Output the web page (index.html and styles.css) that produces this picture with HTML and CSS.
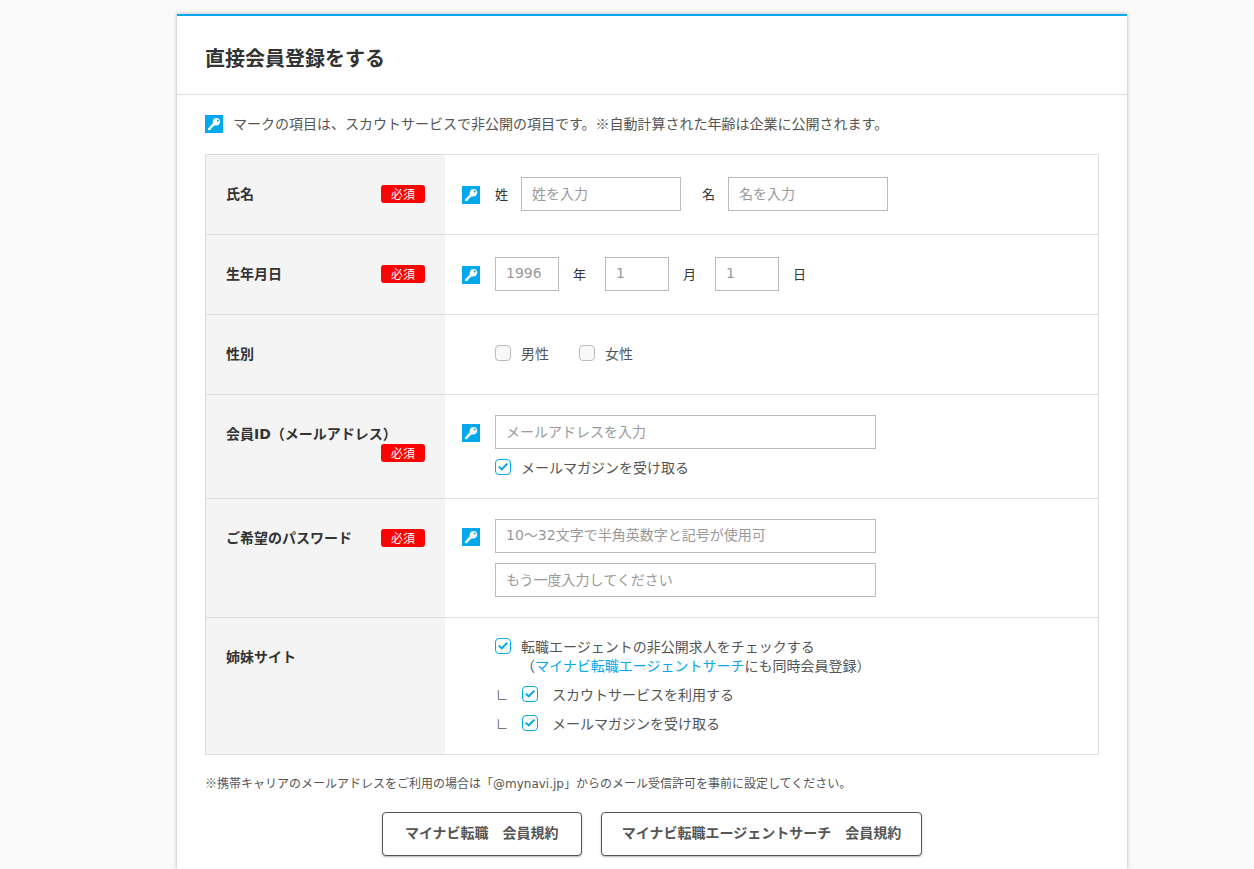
FILE: index.html
```html
<!DOCTYPE html>
<html lang="ja">
<head>
<meta charset="utf-8">
<meta name="viewport" content="width=device-width, initial-scale=1">
<title>直接会員登録をする</title>
<link rel="stylesheet" href="styles.css">
</head>
<body>
<svg class="sprite" aria-hidden="true">
  <symbol id="key" viewBox="0 0 18 18">
    <path fill="#fff" fill-rule="evenodd" d="M11.6 3c2.200 0 3.600 1.400 3.600 3.500 0 2.300-1.600 4-3.800 4-.6 0-1.100-.1-1.600-.3l-1.200 1.300-1 .1-.1 1.100-1.100.1-.2 1.200-1 .9-2 .4-.2-1.900 4.800-5c-.2-.5-.2-1-.1-1.600.2-2.200 1.700-3.800 3.900-3.800zm1.300 1.400a1 1 0 1 0 0 2 1 1 0 0 0 0-2z"/>
  </symbol>
</svg>
<main class="card">
  <header class="card-head">
    <h1 class="title">直接会員登録をする</h1>
  </header>
  <form class="card-body">
    <p class="notice">
      <svg class="key" aria-hidden="true"><use href="#key"/></svg>
      <span>マークの項目は、スカウトサービスで非公開の項目です。※自動計算された年齢は企業に公開されます。</span>
    </p>

    <div class="fields">
      <div class="row">
        <div class="row-label"><span>氏名</span><span class="required">必須</span></div>
        <div class="row-content one-line">
          <svg class="key" aria-hidden="true"><use href="#key"/></svg>
          <div class="inline">
            <label for="sei">姓</label>
            <input class="text name" id="sei" type="text" placeholder="姓を入力">
            <label class="next" for="mei">名</label>
            <input class="text name" id="mei" type="text" placeholder="名を入力">
          </div>
        </div>
      </div>

      <div class="row">
        <div class="row-label"><span>生年月日</span><span class="required">必須</span></div>
        <div class="row-content one-line">
          <svg class="key" aria-hidden="true"><use href="#key"/></svg>
          <div class="inline">
            <input class="text date" id="year" type="text" placeholder="1996">
            <label class="unit" for="year">年</label>
            <input class="text date" id="month" type="text" placeholder="1">
            <label class="unit" for="month">月</label>
            <input class="text date" id="day" type="text" placeholder="1">
            <label class="unit" for="day">日</label>
          </div>
        </div>
      </div>

      <div class="row">
        <div class="row-label"><span>性別</span></div>
        <div class="row-content no-key choices">
          <label class="choice"><input class="check" type="checkbox"><span>男性</span></label>
          <label class="choice"><input class="check" type="checkbox"><span>女性</span></label>
        </div>
      </div>

      <div class="row">
        <div class="row-label"><span>会員<span class="latin">ID</span>（メールアドレス）</span><span class="required">必須</span></div>
        <div class="row-content">
          <svg class="key" aria-hidden="true"><use href="#key"/></svg>
          <div class="stack">
            <input class="text" type="email" aria-label="会員ID（メールアドレス）" placeholder="メールアドレスを入力">
            <label class="choice"><input class="check" type="checkbox" checked><span>メールマガジンを受け取る</span></label>
          </div>
        </div>
      </div>

      <div class="row">
        <div class="row-label"><span>ご希望のパスワード</span><span class="required">必須</span></div>
        <div class="row-content">
          <svg class="key" aria-hidden="true"><use href="#key"/></svg>
          <div class="stack">
            <input class="text latin" type="password" aria-label="ご希望のパスワード" placeholder="10～32文字で半角英数字と記号が使用可">
            <input class="text" type="password" aria-label="ご希望のパスワード（確認）" placeholder="もう一度入力してください">
          </div>
        </div>
      </div>

      <div class="row">
        <div class="row-label"><span>姉妹サイト</span></div>
        <div class="row-content no-key">
          <div class="stack">
            <div class="choice">
              <input class="check" id="agent" type="checkbox" checked>
              <div><label for="agent">転職エージェントの非公開求人をチェックする</label><br>（<a class="link" href="#">マイナビ転職エージェントサーチ</a>にも同時会員登録）</div>
            </div>
            <label class="choice sub"><span class="branch">∟</span><input class="check" type="checkbox" checked><span>スカウトサービスを利用する</span></label>
            <label class="choice sub"><span class="branch">∟</span><input class="check" type="checkbox" checked><span>メールマガジンを受け取る</span></label>
          </div>
        </div>
      </div>
    </div>

    <p class="caution">※携帯キャリアのメールアドレスをご利用の場合は「<span class="latin">@mynavi.jp</span>」からのメール受信許可を事前に設定してください。</p>

    <div class="actions">
      <button class="terms" type="button">マイナビ転職　会員規約</button>
      <button class="terms" type="button">マイナビ転職エージェントサーチ　会員規約</button>
    </div>
  </form>
</main>
</body>
</html>
```
FILE: styles.css
```css
* {
  box-sizing: border-box;
}

body {
  display: flex;
  flex-direction: column;
  min-height: 100vh;
  margin: 0;
  padding: 14px 0 0 50px;
  background: #fafafa;
  color: #555;
  font-family: "Noto Sans CJK JP", sans-serif;
  font-size: 14px;
  line-height: 19px;
}

input,
button {
  margin: 0;
  font-family: inherit;
}

.sprite {
  position: absolute;
  width: 0;
  height: 0;
}

.latin {
  font-family: "DejaVu Sans", "Noto Sans CJK JP", sans-serif;
}

.card {
  flex: 1;
  width: 100%;
  max-width: 950px;
  margin: 0 auto;
  border-top: 2px solid #00a9ec;
  background: #fff;
  box-shadow: 0 0 4px rgba(0, 0, 0, 0.3);
}

.card-head {
  padding: 31px 28px 25px;
  border-bottom: 1px solid #ddd;
}

.title {
  margin: 0;
  color: #333;
  font-size: 20px;
  line-height: 22px;
}

.card-body {
  padding: 20px 28px 12px;
}

.notice {
  display: flex;
  gap: 10px;
  margin: 0 0 21px;
  line-height: 17px;
}

.key {
  flex: none;
  width: 18px;
  height: 18px;
  background: #00a9ec;
}

.fields {
  border: 1px solid #ddd;
}

.row {
  display: grid;
  grid-template-columns: 239px 1fr;
}

.row + .row {
  border-top: 1px solid #ddd;
}

.row-label {
  display: flex;
  flex-wrap: wrap;
  align-items: center;
  align-content: flex-start;
  padding: 29px 20px;
  background: #f4f4f4;
  color: #333;
  font-weight: bold;
}

.required {
  width: 44px;
  margin-left: auto;
  border-radius: 3px;
  background: #f00;
  color: #fff;
  font-size: 12px;
  font-weight: normal;
  line-height: 18px;
  text-align: center;
}

.row-content {
  display: flex;
  align-items: flex-start;
  min-height: 79px;
  padding: 20px 17px;
}

.row-content .key {
  margin: 9px 15px 0 0;
}

.one-line {
  padding-top: 22px;
}

.no-key {
  padding-left: 50px;
}

.choices {
  gap: 30px;
  padding-top: 30px;
}

.inline {
  display: flex;
  flex: 1;
  align-items: center;
  color: #333;
  font-size: 13px;
}

.inline label {
  padding-bottom: 2px;
}

.inline label + .text {
  margin-left: 13px;
}

.inline .next {
  margin-left: 21px;
}

.inline .unit {
  margin-left: 14px;
}

.inline .unit + .text {
  margin-left: 19px;
}

.text {
  width: 100%;
  height: 34px;
  padding: 0 10px 2px;
  border: 1px solid #bbb;
  border-radius: 0;
  background: #fff;
  color: #333;
  font-size: 14px;
}

.text::placeholder {
  color: #999;
  opacity: 1;
}

.name {
  width: 160px;
}

.date {
  width: 64px;
  font-family: "DejaVu Sans", sans-serif;
}

.stack {
  display: flex;
  flex: 0 1 381px;
  flex-direction: column;
  gap: 10px;
}

.choice {
  display: flex;
  gap: 10px;
  margin: -1px 0 1px;
}

.sub {
  gap: 14px;
}

.branch {
  width: 13px;
  font-size: 12px;
  text-align: right;
}

.check {
  flex: none;
  width: 16px;
  height: 16px;
  margin-top: 1px;
  border: 1px solid #bbb;
  border-radius: 4px;
  background: #f8f8f8;
  appearance: none;
}

.check:checked {
  display: grid;
  place-items: center;
  border-color: #00a9ec;
  background: #fff;
}

.check:checked::before {
  width: 10px;
  height: 8px;
  background: #00a9ec;
  clip-path: polygon(0 52%, 14% 36%, 37% 62%, 86% 0, 100% 15%, 39% 96%);
  content: "";
}

.link {
  color: #00a9ec;
  text-decoration: none;
}

.caution {
  margin: 18px 0;
  font-size: 12px;
}

.actions {
  display: flex;
  flex-wrap: wrap;
  justify-content: center;
  gap: 19px;
}

.terms {
  min-width: 200px;
  height: 44px;
  padding: 0 20px 4px;
  border: 1px solid #555;
  border-radius: 4px;
  background: #fff;
  box-shadow: 0 1px 2px rgba(0, 0, 0, 0.3);
  color: #555;
  font-size: 14px;
  font-weight: bold;
}
```
